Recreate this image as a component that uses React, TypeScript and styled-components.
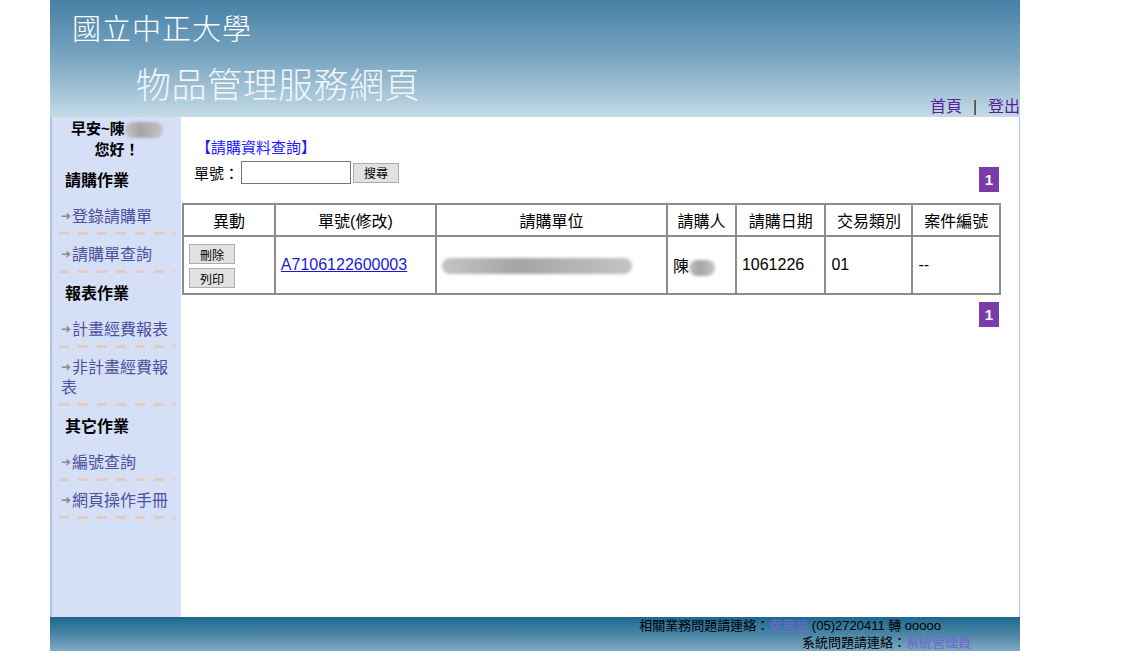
import React from "react";
import styled, { createGlobalStyle } from "styled-components";

const Global = createGlobalStyle`
  html, body { margin: 0; padding: 0; background: #fff; }
  body { font-family: "Liberation Sans", "Noto Sans CJK TC", sans-serif; }
`;

const CJK = `"Liberation Sans", "Noto Sans CJK TC", sans-serif`;

const Page = styled.div`
  margin-left: 50px;
  width: 970px;
`;

const Header = styled.div`
  height: 117px;
  box-sizing: border-box;
  background: linear-gradient(180deg, #4780a6 0%, #7aa6c2 50%, #c4dbe6 100%);
  display: flex;
  flex-direction: column;
  padding-top: 12px;
`;

const Title1 = styled.div`
  font-family: ${CJK};
  font-size: 29px;
  font-weight: 300;
  color: #fff;
  letter-spacing: 1px;
  line-height: 36px;
  padding-left: 22px;
`;

const HeaderBottom = styled.div`
  flex: 1;
  display: flex;
  justify-content: space-between;
  align-items: flex-end;
`;

const Title2 = styled.div`
  font-family: ${CJK};
  font-size: 35px;
  font-weight: 300;
  color: #f2f6f9;
  letter-spacing: 0.5px;
  line-height: 44px;
  padding-left: 86px;
  margin-bottom: 9px;
`;

const Nav = styled.div`
  display: flex;
  align-items: center;
  gap: 12px;
  font-family: ${CJK};
  font-size: 16px;
  line-height: 20px;
`;

const NavLink = styled.a`
  color: #5a1d9c;
  text-decoration: none;
`;

const NavSep = styled.span`
  width: 2px;
  height: 15px;
  background: linear-gradient(90deg, #9a6a1c 50%, #2a5aa0 50%);
`;

const Body = styled.div`
  display: flex;
  height: 500px;
  border-left: 2px solid #abc3f2;
  border-right: 2px solid #abc3f2;
`;

const Sidebar = styled.div`
  width: 129px;
  flex: none;
  background: #d5e0f7;
  box-sizing: border-box;
  padding: 1px 6px 0 7px;
  font-family: ${CJK};
`;

const Greeting = styled.div`
  text-align: center;
  font-weight: bold;
  font-size: 15px;
  line-height: 21px;
  color: #000;
`;

const Blur = styled.span<{ w: number }>`
  display: inline-block;
  vertical-align: middle;
  width: ${(p) => p.w}px;
  height: 16px;
  background: linear-gradient(90deg, #c4c4c4, #a4a4a4 40%, #c4c4c4);
  filter: blur(1.5px);
  border-radius: 8px;
`;

const Section = styled.div`
  font-weight: bold;
  font-size: 16px;
  line-height: 22px;
  color: #000;
  padding-left: 6px;
  margin: 10px 0 14px;
`;

const MenuItem = styled.a`
  display: block;
  font-size: 16px;
  line-height: 20px;
  color: #4f4f9f;
  text-decoration: none;
  padding: 0 0 8px 2px;
  margin-bottom: 9px;
  background-image: linear-gradient(90deg, #e9c9bb 10px, transparent 10px);
  background-size: 19px 3px;
  background-repeat: repeat-x;
  background-position: 0 bottom;
`;

const Arrow = styled.span`
  display: inline-block;
  color: #8a8a8a;
  font-size: 12px;
  width: 11px;
  vertical-align: 2px;
`;

const Main = styled.div`
  flex: 1;
  background: #fff;
  padding: 21px 18px 0 1px;
  font-family: ${CJK};
`;

const QueryTitle = styled.div`
  color: #1a1aff;
  font-size: 15px;
  line-height: 20px;
  padding-left: 14px;
`;

const QueryRow = styled.div`
  display: flex;
  justify-content: space-between;
  align-items: flex-start;
  padding-left: 12px;
  margin-top: 3px;
`;

const SearchForm = styled.div`
  display: flex;
  align-items: center;
  font-size: 15px;
  gap: 2px;
`;

const Input = styled.input`
  width: 110px;
  height: 23px;
  box-sizing: border-box;
  border: 1px solid #767676;
  margin: 0;
`;

const Button = styled.button`
  font-family: ${CJK};
  font-size: 12px;
  background: #e1e1e1;
  border: 1px solid #adadad;
  padding: 0;
  height: 20px;
  width: 46px;
  color: #000;
`;

const PageBox = styled.span`
  display: inline-flex;
  align-items: center;
  justify-content: center;
  width: 20px;
  height: 25px;
  background: #7a3ca8;
  color: #fff;
  font-family: "Liberation Sans", sans-serif;
  font-weight: bold;
  font-size: 15px;
`;

const PagerTop = styled.div`
  margin-top: 6px;
  margin-right: 2px;
`;

const PagerBottom = styled.div`
  display: flex;
  justify-content: flex-end;
  margin-top: 7px;
  margin-right: 2px;
`;

const Table = styled.table`
  width: 819px;
  border-collapse: collapse;
  margin-top: 11px;
  border: 2px solid #8c8c8c;
  font-size: 16px;
`;

const Th = styled.th<{ w: number }>`
  width: ${(p) => p.w}px;
  height: 30px;
  font-weight: normal;
  border: 2px solid #8c8c8c;
  text-align: center;
  padding: 0;
`;

const Td = styled.td`
  border: 2px solid #8c8c8c;
  height: 56px;
  padding: 0 5px;
  text-align: left;
  font-family: "Liberation Sans", "Noto Sans CJK TC", sans-serif;
`;

const BtnStack = styled.div`
  display: flex;
  flex-direction: column;
  gap: 4px;
  margin-top: 2px;
`;

const OrderLink = styled.a`
  color: #1a1ad6;
  text-decoration: underline;
`;

const Footer = styled.div`
  height: 34px;
  background: linear-gradient(180deg, #1d6890 0%, #4f88a8 55%, #80abc4 100%);
  display: flex;
  flex-direction: column;
  align-items: flex-end;
  font-family: ${CJK};
  font-size: 13px;
  line-height: 17px;
  color: #000;
  padding-right: 49px;
  box-sizing: border-box;
`;

const FootLine = styled.div<{ shift: number }>`
  margin-right: ${(p) => p.shift}px;
`;

const FootLink = styled.a`
  color: #7466d4;
  text-decoration: none;
`;

export default function App() {
  return (
    <>
      <Global />
      <Page>
        <Header>
          <Title1>國立中正大學</Title1>
          <HeaderBottom>
            <Title2>物品管理服務網頁</Title2>
            <Nav>
              <NavLink>首頁</NavLink>
              <NavSep />
              <NavLink>登出</NavLink>
            </Nav>
          </HeaderBottom>
        </Header>
        <Body>
          <Sidebar>
            <Greeting>
              早安~陳<Blur w={38} />
              <br />
              您好！
            </Greeting>
            <Section>請購作業</Section>
            <MenuItem><Arrow>➜</Arrow>登錄請購單</MenuItem>
            <MenuItem><Arrow>➜</Arrow>請購單查詢</MenuItem>
            <Section>報表作業</Section>
            <MenuItem><Arrow>➜</Arrow>計畫經費報表</MenuItem>
            <MenuItem><Arrow>➜</Arrow>非計畫經費報表</MenuItem>
            <Section>其它作業</Section>
            <MenuItem><Arrow>➜</Arrow>編號查詢</MenuItem>
            <MenuItem><Arrow>➜</Arrow>網頁操作手冊</MenuItem>
          </Sidebar>
          <Main>
            <QueryTitle>【請購資料查詢】</QueryTitle>
            <QueryRow>
              <SearchForm>
                單號：<Input /> <Button>搜尋</Button>
              </SearchForm>
              <PagerTop><PageBox>1</PageBox></PagerTop>
            </QueryRow>
            <Table>
              <thead>
                <tr>
                  <Th w={91}>異動</Th>
                  <Th w={160}>單號(修改)</Th>
                  <Th w={230}>請購單位</Th>
                  <Th w={68}>請購人</Th>
                  <Th w={88}>請購日期</Th>
                  <Th w={87}>交易類別</Th>
                  <Th w={88}>案件編號</Th>
                </tr>
              </thead>
              <tbody>
                <tr>
                  <Td>
                    <BtnStack>
                      <Button>刪除</Button>
                      <Button>列印</Button>
                    </BtnStack>
                  </Td>
                  <Td><OrderLink>A7106122600003</OrderLink></Td>
                  <Td><Blur w={190} /></Td>
                  <Td>陳<Blur w={26} /></Td>
                  <Td>1061226</Td>
                  <Td>01</Td>
                  <Td>--</Td>
                </tr>
              </tbody>
            </Table>
            <PagerBottom><PageBox>1</PageBox></PagerBottom>
          </Main>
        </Body>
        <Footer>
          <FootLine shift={30}>
            相關業務問題請連絡：<FootLink>保管組</FootLink> (05)2720411 轉 ooooo
          </FootLine>
          <FootLine shift={0}>
            系統問題請連絡：<FootLink>系統管理員</FootLink>
          </FootLine>
        </Footer>
      </Page>
    </>
  );
}
